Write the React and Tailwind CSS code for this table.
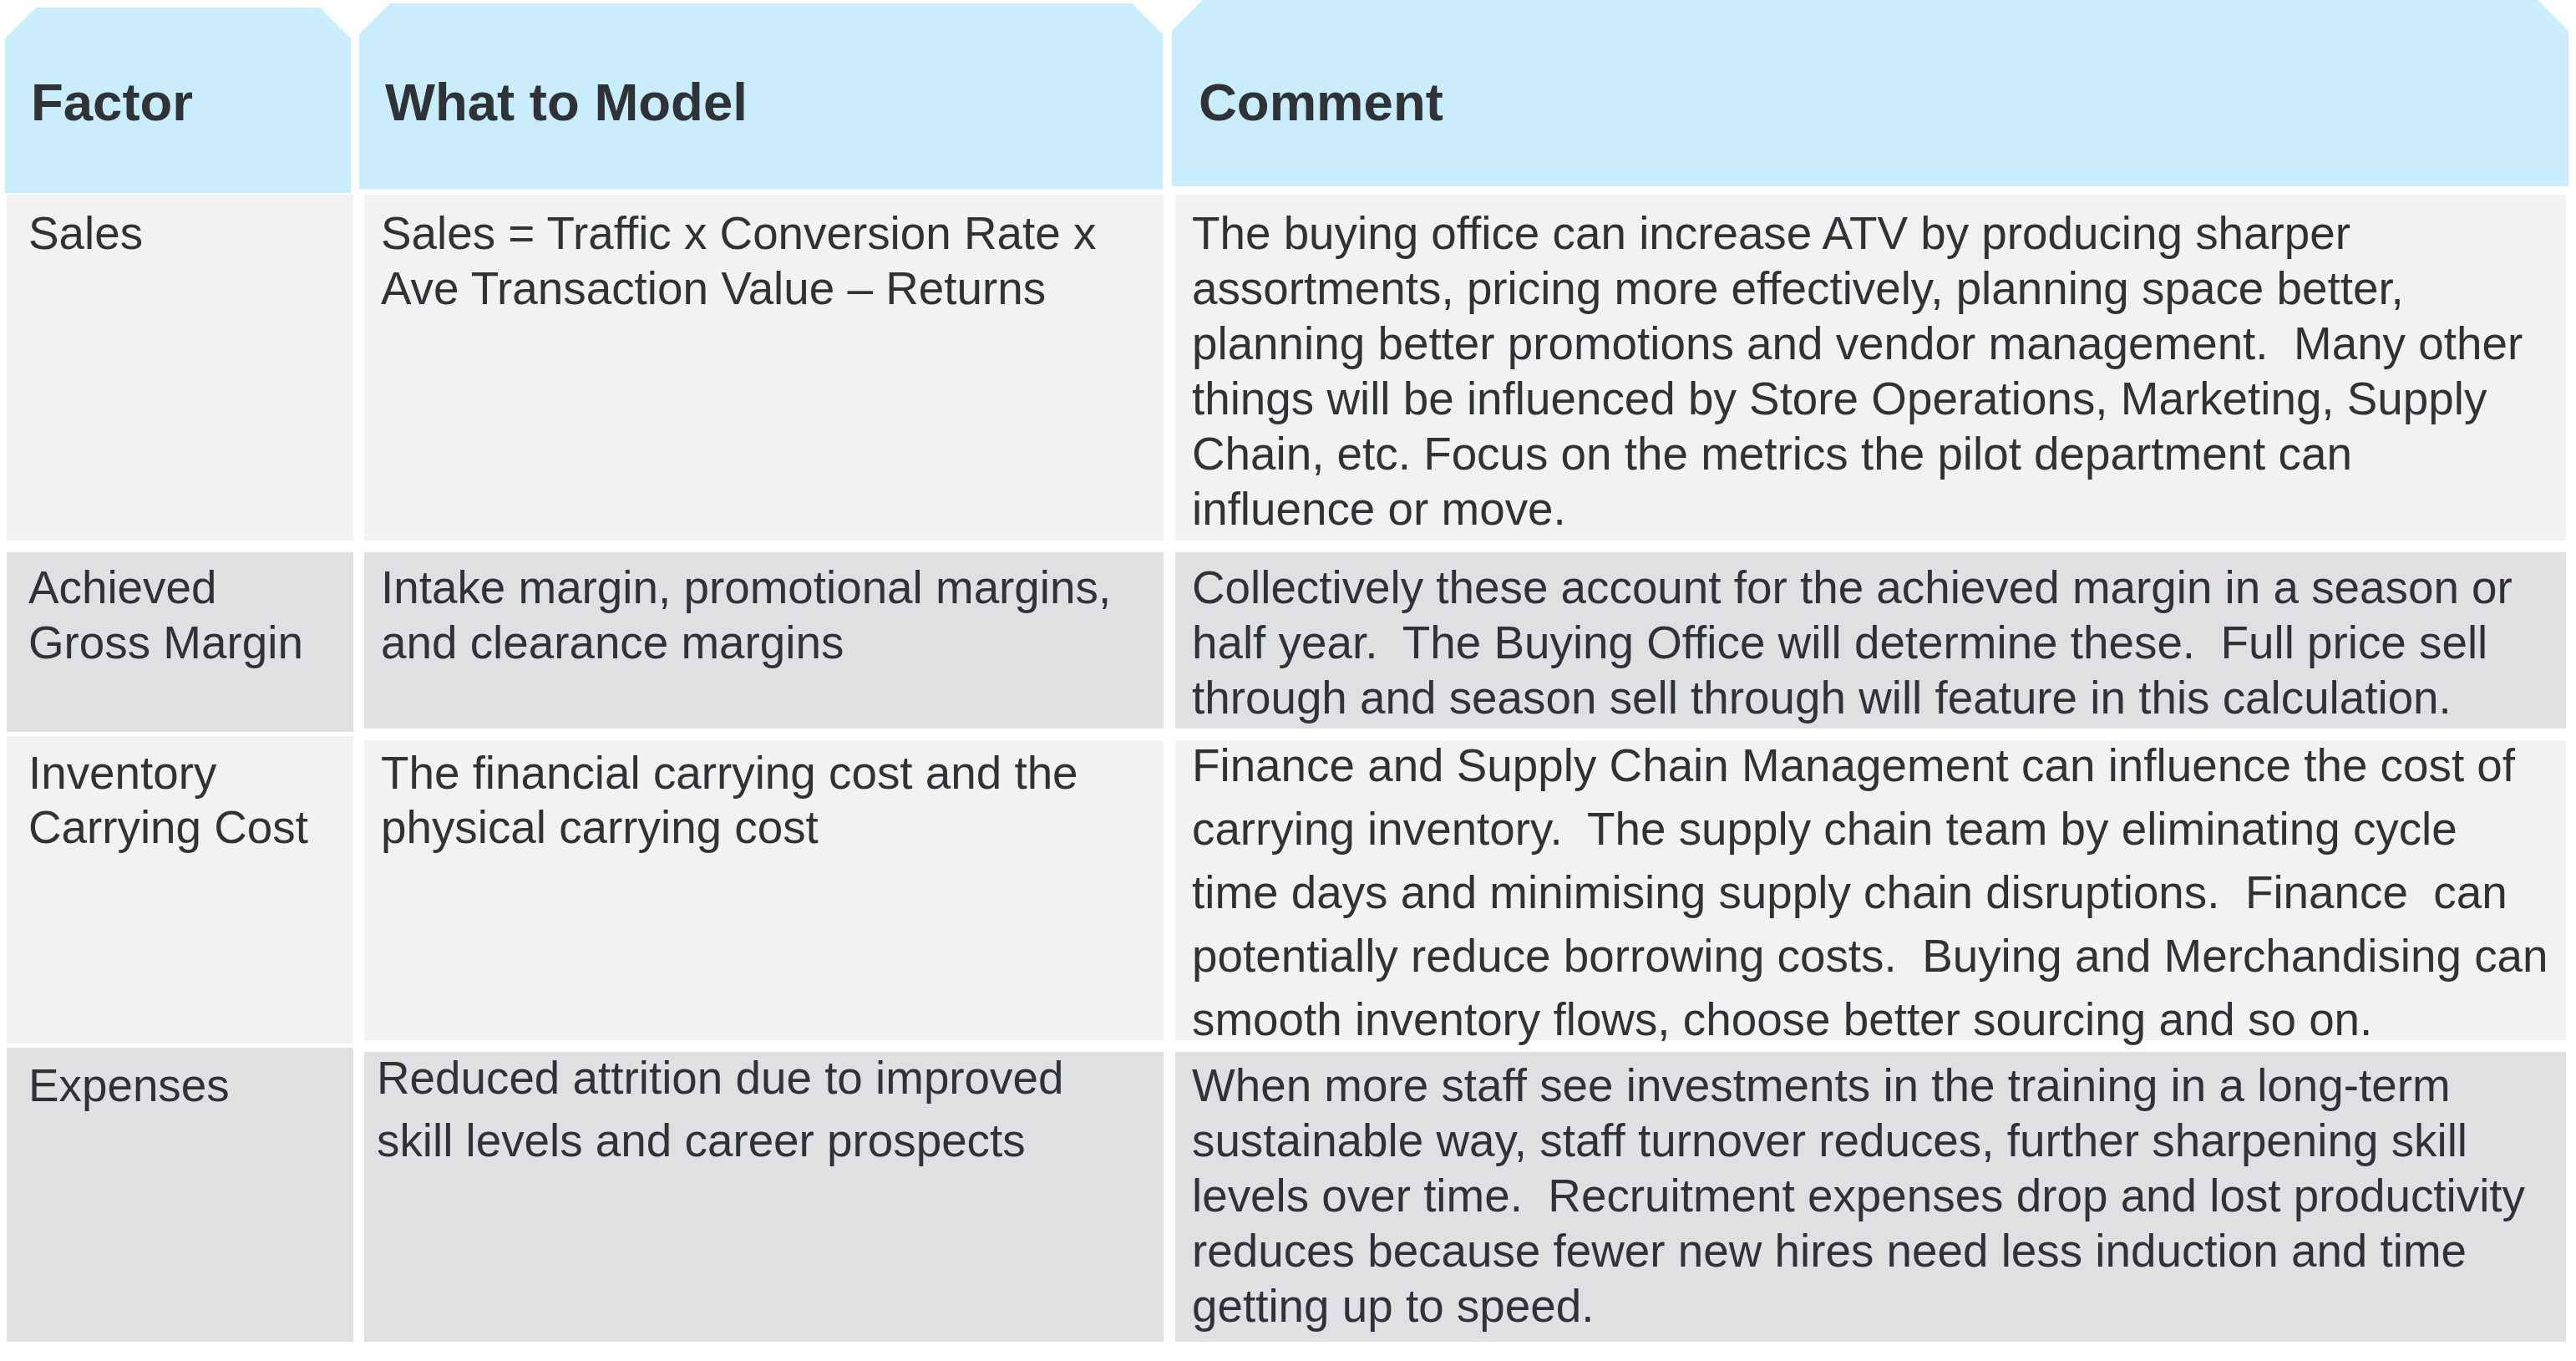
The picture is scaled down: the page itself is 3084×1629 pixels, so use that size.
const headerShape =
  'bg-[#c9edfc] [clip-path:polygon(37px_0,calc(100%_-_37px)_0,100%_37px,100%_100%,0_100%,0_37px)]'

const light = 'bg-[#f2f2f2]'
const dark = 'bg-[#dfe0e2]'

const columns = [
  {
    wrap: 'ml-[6px] w-[417px] pt-[9px]',
    header: 'w-[414px] h-[222px] pl-[31px] pt-[77px]',
    title: 'Factor',
    cellsWrap: 'ml-[2px] w-[415px]',
    cells: [
      { box: `mt-[2px] h-[414px] ${light}`, text: 'pt-[13px] pl-[26px] leading-[66px]', lines: ['Sales'] },
      { box: `mt-[14px] h-[215px] ${dark}`, text: 'pt-[9px] pl-[26px] leading-[66px]', lines: ['Achieved', 'Gross Margin'] },
      { box: `mt-[5px] h-[368px] ${light}`, text: 'pt-[12px] pl-[26px] leading-[65px]', lines: ['Inventory', 'Carrying Cost'] },
      { box: `mt-[5px] h-[352px] ${dark}`, text: 'pt-[12px] pl-[26px] leading-[66px]', lines: ['Expenses'] },
    ],
  },
  {
    wrap: 'ml-[7px] w-[963px] pt-[4px]',
    header: 'w-[962px] h-[222px] pl-[31px] pt-[82px]',
    title: 'What to Model',
    cellsWrap: 'ml-[6px] w-[957px]',
    cells: [
      {
        box: `mt-[7px] h-[414px] ${light}`,
        text: 'pt-[13px] pl-[20px] leading-[66px]',
        lines: ['Sales = Traffic x Conversion Rate x', 'Ave Transaction Value – Returns'],
      },
      {
        box: `mt-[14px] h-[211px] ${dark}`,
        text: 'pt-[9px] pl-[20px] leading-[66px]',
        lines: ['Intake margin, promotional margins,', 'and clearance margins'],
      },
      {
        box: `mt-[14px] h-[359px] ${light}`,
        text: 'pt-[7px] pl-[20px] leading-[65px]',
        lines: ['The financial carrying cost and the', 'physical carrying cost'],
      },
      {
        box: `mt-[14px] h-[347px] ${dark}`,
        text: '-mt-[6px] pl-[15px] leading-[75px]',
        lines: ['Reduced attrition due to improved', 'skill levels and career prospects'],
      },
    ],
  },
  {
    wrap: 'ml-[10px] w-[1672px]',
    header: 'w-[1672px] h-[223px] pl-[32px] pt-[86px]',
    title: 'Comment',
    cellsWrap: 'ml-[4px] w-[1665px]',
    cells: [
      {
        box: `mt-[10px] h-[414px] ${light}`,
        text: 'pt-[13px] pl-[20px] leading-[66px]',
        lines: [
          'The buying office can increase ATV by producing sharper',
          'assortments, pricing more effectively, planning space better,',
          'planning better promotions and vendor management.  Many other',
          'things will be influenced by Store Operations, Marketing, Supply',
          'Chain, etc. Focus on the metrics the pilot department can',
          'influence or move.',
        ],
      },
      {
        box: `mt-[14px] h-[211px] ${dark}`,
        text: 'pt-[9px] pl-[20px] leading-[66px]',
        lines: [
          'Collectively these account for the achieved margin in a season or',
          'half year.  The Buying Office will determine these.  Full price sell',
          'through and season sell through will feature in this calculation.',
        ],
      },
      {
        box: `mt-[14px] h-[359px] ${light}`,
        text: '-mt-[8px] pl-[20px] leading-[76px]',
        lines: [
          'Finance and Supply Chain Management can influence the cost of',
          'carrying inventory.  The supply chain team by eliminating cycle',
          'time days and minimising supply chain disruptions.  Finance  can',
          'potentially reduce borrowing costs.  Buying and Merchandising can',
          'smooth inventory flows, choose better sourcing and so on.',
        ],
      },
      {
        box: `mt-[14px] h-[347px] ${dark}`,
        text: 'pt-[7px] pl-[20px] leading-[66px]',
        lines: [
          'When more staff see investments in the training in a long-term',
          'sustainable way, staff turnover reduces, further sharpening skill',
          'levels over time.  Recruitment expenses drop and lost productivity',
          'reduces because fewer new hires need less induction and time',
          'getting up to speed.',
        ],
      },
    ],
  },
]

const App = () => {
  return (
    <div className="min-h-[1629px] w-[3084px] bg-white [font-family:'Liberation_Sans',Arial,sans-serif] text-[#303336]">
      <div className="flex items-start">
        {columns.map((col) => (
          <div key={col.title} className={`flex shrink-0 flex-col ${col.wrap}`}>
            <div className={`${headerShape} ${col.header}`}>
              <h2 className="whitespace-pre text-[63.5px] font-bold leading-[72px]">{col.title}</h2>
            </div>
            <div className={`flex flex-col ${col.cellsWrap}`}>
              {col.cells.map((cell, i) => (
                <div key={i} className={`overflow-visible ${cell.box}`}>
                  <div className={`text-[54.8px] ${cell.text}`}>
                    {cell.lines.map((line) => (
                      <p key={line} className="whitespace-pre">{line}</p>
                    ))}
                  </div>
                </div>
              ))}
            </div>
          </div>
        ))}
      </div>
    </div>
  )
}

export default App
